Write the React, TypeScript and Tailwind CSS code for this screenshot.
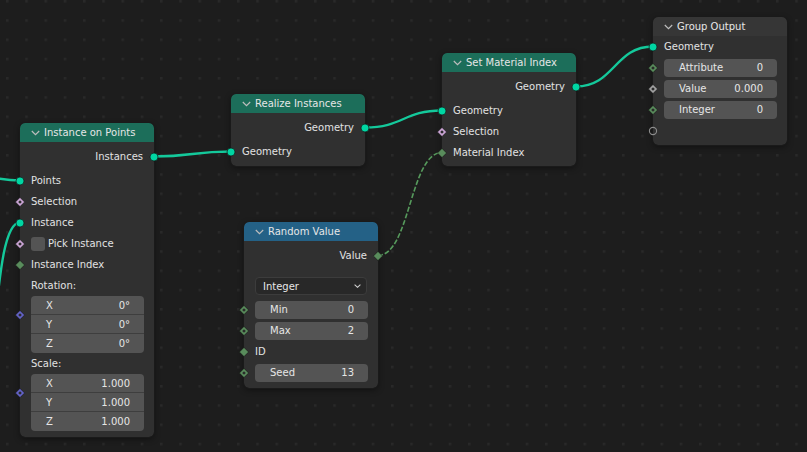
import React from 'react';

type SocketKind = 'geo' | 'bool' | 'int' | 'intDot' | 'vec' | 'float' | 'empty';

const FONT = { fontFamily: '"DejaVu Sans", "Liberation Sans", sans-serif' };

const COLORS: Record<string, string> = {
  geo: '#00d6a3',
  bool: '#cca6d6',
  int: '#598c5c',
  intDot: '#598c5c',
  vec: '#6363c7',
  float: '#a1a1a1',
};

function SocketShape({ kind }: { kind: SocketKind }) {
  if (kind === 'geo') {
    return <circle cx="6" cy="6" r="4" fill={COLORS.geo} stroke="#141414" strokeWidth="0.7" />;
  }
  if (kind === 'empty') {
    return <circle cx="6" cy="6" r="3.6" fill="none" stroke="#8c8c8c" strokeWidth="1.1" />;
  }
  const dot = kind !== 'int';
  return (
    <>
      <polygon points="6,1.4 10.6,6 6,10.6 1.4,6" fill={COLORS[kind]} stroke="#141414" strokeWidth="0.6" />
      {dot && <polygon points="6,4.2 7.8,6 6,7.8 4.2,6" fill="#2a2a2a" />}
    </>
  );
}

function Socket({ kind, side }: { kind: SocketKind; side: 'left' | 'right' }) {
  return (
    <svg
      className={side === 'left' ? 'absolute top-1/2 left-[-6px] -translate-y-1/2' : 'absolute top-1/2 right-[-6px] -translate-y-1/2'}
      width="12"
      height="12"
      viewBox="0 0 12 12"
    >
      <SocketShape kind={kind} />
    </svg>
  );
}

function Chevron() {
  return (
    <svg width="9" height="6" viewBox="0 0 9 6" className="shrink-0">
      <polyline points="0.8,1 4.5,4.6 8.2,1" fill="none" stroke="#bdbdbd" strokeWidth="1.2" />
    </svg>
  );
}

function Node({ pos, title, header, children }: { pos: string; title: string; header: string; children: React.ReactNode }) {
  return (
    <div className={`absolute w-[134px] rounded-[5px] bg-[#303030] shadow-[0_2px_6px_rgba(0,0,0,0.45)] outline outline-1 outline-[#1a1a1a] ${pos}`}>
      <div className={`flex h-[19px] items-center gap-[4px] rounded-t-[5px] pl-[11px] ${header}`}>
        <Chevron />
        <span className="text-[10px] leading-none text-[#e6e6e6]">{title}</span>
      </div>
      {children}
    </div>
  );
}

function Out({ label, kind }: { label: string; kind: SocketKind }) {
  return (
    <div className="relative flex h-[21px] items-center justify-end pr-[11px] text-[10px] text-[#e2e2e2]">
      {label}
      <Socket kind={kind} side="right" />
    </div>
  );
}

function In({ label, kind, children }: { label?: string; kind: SocketKind; children?: React.ReactNode }) {
  return (
    <div className="relative flex h-[21px] items-center pl-[11px] text-[10px] text-[#e2e2e2]">
      {children ?? label}
      <Socket kind={kind} side="left" />
    </div>
  );
}

function Field({ label, value }: { label: string; value: string }) {
  return (
    <div className="flex h-[18px] w-full items-center justify-between rounded-[4px] bg-[#545454] pl-[15px] pr-[14px] text-[10px] text-[#e6e6e6]">
      <span>{label}</span>
      <span>{value}</span>
    </div>
  );
}

function FieldIn({ label, value, kind }: { label: string; value: string; kind: SocketKind }) {
  return (
    <div className="relative flex h-[21px] items-center pl-[11px] pr-[10px]">
      <Field label={label} value={value} />
      <Socket kind={kind} side="left" />
    </div>
  );
}

function VectorBlock({ label, values }: { label: string; values: string[] }) {
  return (
    <>
      <div className="flex h-[21px] items-center pl-[11px] text-[10px] text-[#e2e2e2]">{label}</div>
      <div className="relative ml-[11px] mr-[10px]">
        <div className="flex flex-col divide-y divide-[#3e3e3e] overflow-hidden rounded-[4px] bg-[#545454]">
          {['X', 'Y', 'Z'].map((axis, i) => (
            <div key={axis} className="flex h-[19px] items-center justify-between pl-[15px] pr-[14px] text-[10px] text-[#e6e6e6]">
              <span>{axis}</span>
              <span>{values[i]}</span>
            </div>
          ))}
        </div>
        <svg className="absolute left-[-17px] top-[13px]" width="12" height="12" viewBox="0 0 12 12">
          <SocketShape kind="vec" />
        </svg>
      </div>
    </>
  );
}

function link(x1: number, y1: number, x2: number, y2: number) {
  const d = Math.max(Math.abs(x2 - x1) * 0.5, 20);
  return `M${x1} ${y1} C${x1 + d} ${y1} ${x2 - d} ${y2} ${x2} ${y2}`;
}

export default function App() {
  return (
    <div className="relative h-[452px] w-[807px] overflow-hidden bg-[#1d1d1d]" style={FONT}>
      <svg className="absolute inset-0" width="807" height="452">
        <defs>
          <pattern id="dots" x="6" y="0" width="19.25" height="19.25" patternUnits="userSpaceOnUse">
            <rect x="0" y="0" width="2.5" height="2.5" fill="#292929" />
          </pattern>
        </defs>
        <rect width="807" height="452" fill="url(#dots)" />
        <g fill="none" stroke="#14c99b" strokeWidth="2.4">
          <path d="M-80 160 C-40 160 -20 180.5 20 180.5" />
          <path d="M-30 420 C0 420 -10 222.5 20 222.5" />
          <path d={link(154, 156.5, 231, 151.5)} />
          <path d={link(365, 127.5, 442, 110.5)} />
          <path d={link(576, 86.5, 653, 46.5)} />
        </g>
        <path d={link(378, 255.5, 442, 152.5)} fill="none" stroke="#569a5c" strokeWidth="1.6" strokeDasharray="5 2" />
      </svg>

      <Node pos="left-[20px] top-[123px]" title="Instance on Points" header="bg-[#1c6e5a]">
        <div className="h-[4px]" />
        <Out label="Instances" kind="geo" />
        <div className="h-[3px]" />
        <In label="Points" kind="geo" />
        <In label="Selection" kind="bool" />
        <In label="Instance" kind="geo" />
        <In kind="bool">
          <span className="mr-[3px] h-[14px] w-[14px] rounded-[3px] bg-[#545454]" />
          Pick Instance
        </In>
        <In label="Instance Index" kind="int" />
        <VectorBlock label="Rotation:" values={['0°', '0°', '0°']} />
        <VectorBlock label="Scale:" values={['1.000', '1.000', '1.000']} />
        <div className="h-[6px]" />
      </Node>

      <Node pos="left-[231px] top-[94px]" title="Realize Instances" header="bg-[#1c6e5a]">
        <div className="h-[4px]" />
        <Out label="Geometry" kind="geo" />
        <div className="h-[3px]" />
        <In label="Geometry" kind="geo" />
        <div className="h-[4px]" />
      </Node>

      <Node pos="left-[442px] top-[53px]" title="Set Material Index" header="bg-[#1c6e5a]">
        <div className="h-[4px]" />
        <Out label="Geometry" kind="geo" />
        <div className="h-[3px]" />
        <In label="Geometry" kind="geo" />
        <In label="Selection" kind="bool" />
        <In label="Material Index" kind="int" />
        <div className="h-[3px]" />
      </Node>

      <Node pos="left-[653px] top-[17px]" title="Group Output" header="bg-[#363636]">
        <In label="Geometry" kind="geo" />
        <FieldIn label="Attribute" value="0" kind="intDot" />
        <FieldIn label="Value" value="0.000" kind="float" />
        <FieldIn label="Integer" value="0" kind="intDot" />
        <In label="" kind="empty" />
        <div className="h-[4px]" />
      </Node>

      <Node pos="left-[244px] top-[222px]" title="Random Value" header="bg-[#246186]">
        <div className="h-[4px]" />
        <Out label="Value" kind="int" />
        <div className="mx-[11px] mb-[4px] mt-[11px] flex h-[18px] items-center justify-between rounded-[4px] border border-[#3c3c3c] bg-[#282828] pl-[7px] pr-[5px] text-[10px] text-[#e6e6e6]">
          <span>Integer</span>
          <svg width="7" height="4" viewBox="0 0 7 4">
            <polyline points="0.6,0.6 3.5,3.3 6.4,0.6" fill="none" stroke="#d0d0d0" strokeWidth="1.1" />
          </svg>
        </div>
        <FieldIn label="Min" value="0" kind="intDot" />
        <FieldIn label="Max" value="2" kind="intDot" />
        <In label="ID" kind="int" />
        <FieldIn label="Seed" value="13" kind="intDot" />
        <div className="h-[5px]" />
      </Node>
    </div>
  );
}
